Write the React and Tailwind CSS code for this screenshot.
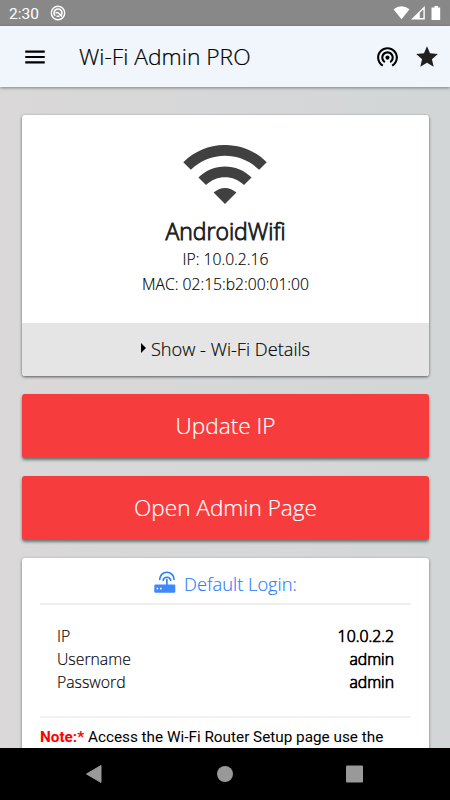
import { MdMenu, MdStar, MdWifiTethering } from 'react-icons/md';

const WifiLogo = () => (
  <svg viewBox="1 4.45 22 15.55" className="mr-px h-[59px] w-[84px]" fill="#404040">
    <path d="M1 9l2 2c4.97-4.97 13.03-4.97 18 0l2-2C16.93 2.93 7.08 2.93 1 9zm8 8l3 3 3-3c-1.65-1.66-4.34-1.66-6 0zm-4-4l2 2c2.76-2.76 7.24-2.76 10 0l2-2C15.14 9.14 8.87 9.14 5 13z" />
  </svg>
);

const RouterIcon = () => (
  <svg viewBox="0 0 22 22" className="mb-[5px] h-[22px] w-[22px]" fill="none" stroke="#2680fb" strokeLinecap="round">
    <path d="M5.7 8.4a7.2 7.2 0 0 1 14.4 0" strokeWidth="1.6" />
    <path d="M9.1 9.2a3.9 3.9 0 0 1 7.6 0" strokeWidth="1.6" />
    <path d="M12.9 8.5v6" strokeWidth="1.6" />
    <rect x="0.3" y="13.6" width="21" height="8.2" rx="1.2" fill="#3f88fc" stroke="none" />
    <rect x="2.6" y="16.8" width="1.6" height="1.6" fill="#fff" stroke="none" />
    <rect x="6" y="16.8" width="1.6" height="1.6" fill="#fff" stroke="none" />
  </svg>
);

const logins = [
  { label: 'IP', value: '10.0.2.2' },
  { label: 'Username', value: 'admin' },
  { label: 'Password', value: 'admin' },
];

const StatusBar = () => (
  <div className="flex h-[26px] shrink-0 items-center bg-[#888888] pl-[9px] pr-[7px] text-white">
    <span className="pt-[2px] font-[Roboto] text-[15.5px] leading-6 font-normal">2:30</span>
    <svg viewBox="0 0 16 16" className="ml-[11px] h-4 w-4" fill="none" stroke="#fff">
      <circle cx="8" cy="8" r="6.7" strokeWidth="1.4" />
      <path d="M5.2 10.8A4 4 0 1 1 10.8 10.8" strokeWidth="1.6" />
      <path d="M5.5 8.2Q7.5 6.5 9 8.5L12 11.8M6.5 11.3H9.5" strokeWidth="1.5" />
    </svg>
    <svg viewBox="0 0 50 16" className="ml-auto h-4 w-[50px]" fill="#fff">
      <path d="M0.5 4.3Q8.5 -1.7 16.5 4.3L8.5 14.2Z" />
      <path d="M31.8 1v13.5H18Z" />
      <path d="M26.8 7.8l3.6-3.5v8.8h-3.6Z" fill="#888888" />
      <path d="M41.5 1h3.5v1.500h2.2V15h-8.7V2.5h3Z" />
    </svg>
  </div>
);

const RedButton = ({ children }) => (
  <button className="h-16 w-full shrink-0 rounded-[3px] bg-[#f63c3c] text-[22.6px] text-white [-webkit-text-stroke:0.2px_#fff] shadow-[0_2px_3px_rgba(50,80,80,0.7)]">
    {children}
  </button>
);

export default function App() {
  return (
    <div className="flex h-[800px] w-[450px] flex-col overflow-hidden bg-linear-to-r from-[#dad8d9] to-[#d2d6d7] font-['Open_Sans',sans-serif] font-light text-black">
      <StatusBar />

      {/* App bar */}
      <header className="flex h-[61px] shrink-0 items-center bg-[#f0f6fb] pl-[22px] pr-[10px] shadow-[0_1px_3px_rgba(0,0,0,0.4)]">
        <MdMenu className="h-[26px] w-[26px]" />
        <h1 className="ml-[31px] text-[22.8px] leading-[30px] [-webkit-text-stroke:0.2px_#000]">Wi-Fi Admin PRO</h1>
        <MdWifiTethering className="ml-auto h-[25px] w-[25px]" />
        <MdStar className="ml-[14px] h-[26px] w-[26px] text-[#202020]" />
      </header>

      <main className="flex min-h-0 flex-1 flex-col gap-[18px] overflow-hidden pl-[22px] pr-[21px] pt-7">
        {/* Network card */}
        <section className="flex h-[261px] shrink-0 flex-col overflow-hidden rounded-[3px] bg-white shadow-[0_1px_3px_rgba(0,0,0,0.6)]">
          <div className="flex h-[208px] flex-col items-center pt-[30px]">
            <WifiLogo />
            <h2 className="mt-3 text-[23px] leading-[31px] text-[#202020] [-webkit-text-stroke:0.9px_#202020]">AndroidWifi</h2>
            <p className="text-[15.7px] leading-[25px] [-webkit-text-stroke:0.15px_#000]">IP: 10.0.2.16</p>
            <p className="text-[15.7px] leading-[25px] [-webkit-text-stroke:0.15px_#000]">MAC: 02:15:b2:00:01:00</p>
          </div>
          <div className="flex flex-1 items-center justify-center bg-[#e5e5e5] text-[18.2px] [-webkit-text-stroke:0.15px_#000]">
            <svg viewBox="0 0 5 10" className="mr-[5px] mb-[3px] h-[10px] w-[5px]">
              <path d="M0 0l5 5-5 5z" />
            </svg>
            Show - Wi-Fi Details
          </div>
        </section>

        <RedButton>Update IP</RedButton>
        <RedButton>Open Admin Page</RedButton>

        {/* Default login card */}
        <section className="h-[240px] shrink-0 rounded-[3px] bg-white px-[18px] shadow-[0_1px_3px_rgba(0,0,0,0.5)]">
          <div className="flex h-[47px] items-center justify-center border-b-2 border-[#eeeeee] pt-[7px] text-[18.3px] text-[#2b7bfa] [-webkit-text-stroke:0.15px_#2b7bfa]">
            <RouterIcon />
            <span className="ml-2">Default Login:</span>
          </div>
          <div className="h-[113px] border-b-2 border-[#f2f2f2] px-[17px] pt-5 text-[15.8px] leading-[23px]">
            {logins.map((row) => (
              <div key={row.label} className="flex justify-between">
                <span className="[-webkit-text-stroke:0.15px_#000]">{row.label}</span>
                <span className="[-webkit-text-stroke:0.7px_#000]">{row.value}</span>
              </div>
            ))}
          </div>
          <p className="mt-[9px] whitespace-nowrap font-[Roboto] text-[15.3px] font-normal leading-5">
            <b className="text-[#ff0000]">Note:*</b> Access the Wi-Fi Router Setup page use the
          </p>
        </section>
      </main>

      {/* System navigation */}
      <nav className="flex h-[52px] shrink-0 items-center bg-black">
        <svg viewBox="0 0 450 52" className="h-[52px] w-full" fill="#999999">
          <path d="M86.5 26L101 17.5V34.5Z" stroke="#999999" strokeLinejoin="round" />
          <circle cx="225" cy="26" r="8" />
          <rect x="346" y="17.5" width="17" height="17" rx="1" />
        </svg>
      </nav>
    </div>
  );
}
